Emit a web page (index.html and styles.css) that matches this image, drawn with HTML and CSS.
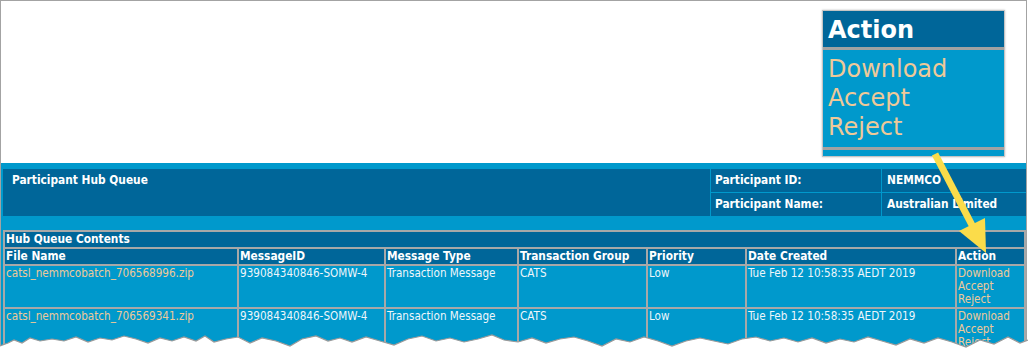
FILE: index.html
```html
<!DOCTYPE html>
<html lang="en">
<head>
    <meta charset="UTF-8">
    <meta name="viewport" content="width=device-width, initial-scale=1.0">
    <title>Participant Hub Queue</title>
    <link rel="stylesheet" href="styles.css">
</head>
<body>

<div class="page">
    <div class="blank"></div>
    <div class="band">
        <div class="hub-head">
            <div class="hub-title">Participant Hub Queue</div>
            <div class="hub-label">Participant ID:</div>
            <div class="hub-value">NEMMCO</div>
            <div class="hub-label">Participant Name:</div>
            <div class="hub-value">Australian Limited</div>
        </div>

        <table class="queue">
            <colgroup>
                <col class="c-file">
                <col class="c-id">
                <col class="c-type">
                <col class="c-group">
                <col class="c-prio">
                <col class="c-date">
                <col class="c-action">
            </colgroup>
            <tr>
                <th colspan="7">Hub Queue Contents</th>
            </tr>
            <tr>
                <th>File Name</th>
                <th>MessageID</th>
                <th>Message Type</th>
                <th>Transaction Group</th>
                <th>Priority</th>
                <th>Date Created</th>
                <th>Action</th>
            </tr>
            <tr>
                <td><a href="#">catsl_nemmcobatch_706568996.zip</a></td>
                <td>939084340846-SOMW-4</td>
                <td>Transaction Message</td>
                <td>CATS</td>
                <td>Low</td>
                <td>Tue Feb 12 10:58:35 AEDT 2019</td>
                <td><a href="#">Download</a><br><a href="#">Accept</a><br><a href="#">Reject</a></td>
            </tr>
            <tr>
                <td><a href="#">catsl_nemmcobatch_706569341.zip</a></td>
                <td>939084340846-SOMW-4</td>
                <td>Transaction Message</td>
                <td>CATS</td>
                <td>Low</td>
                <td>Tue Feb 12 10:58:35 AEDT 2019</td>
                <td><a href="#">Download</a><br><a href="#">Accept</a><br><a href="#">Reject</a></td>
            </tr>
        </table>
    </div>
</div>

<!-- enlarged view of the Action column -->
<div class="zoom-box">
    <div class="zoom-head">Action</div>
    <div class="zoom-sep"></div>
    <div class="zoom-body">
        <a href="#">Download</a><br>
        <a href="#">Accept</a><br>
        <a href="#">Reject</a>
    </div>
    <div class="zoom-sep"></div>
    <div class="zoom-foot"></div>
</div>

<svg class="arrow" width="1028" height="354" viewBox="0 0 1028 354">
    <line x1="935" y1="154" x2="974" y2="229" stroke="#fbdc4a" stroke-width="7"/>
    <polygon points="986,253 959,231 985,218" fill="#fbdc4a"/>
</svg>

<svg class="torn" width="1028" height="354" viewBox="0 0 1028 354">
    <polygon fill="#fff" stroke="none" points="0,346 8,343 14,340 22,343 30,338 40,341 52,339 64,341 76,337 88,342 100,338 112,340 124,336 136,339 148,343 160,338 172,341 184,337 196,341 205,336 214,342 226,339 238,337 250,343 262,338 276,341 290,346 302,339 316,336 328,341 340,338 352,342 366,337 380,341 394,345 408,339 422,336 436,341 450,338 464,342 478,339 492,335 504,340 518,342 532,338 546,343 560,339 574,337 588,341 602,346 616,339 630,342 644,337 658,341 672,346 686,341 700,338 714,341 728,344 742,339 756,337 770,341 784,338 798,342 812,338 826,343 840,339 854,342 868,337 882,341 896,345 910,339 924,343 938,338 952,342 966,347 980,340 994,344 1008,337 1020,343 1028,340 1028,354 0,354"/>
    <polyline fill="none" stroke="#9a9a9a" stroke-width="1.2" points="0,346 8,343 14,340 22,343 30,338 40,341 52,339 64,341 76,337 88,342 100,338 112,340 124,336 136,339 148,343 160,338 172,341 184,337 196,341 205,336 214,342 226,339 238,337 250,343 262,338 276,341 290,346 302,339 316,336 328,341 340,338 352,342 366,337 380,341 394,345 408,339 422,336 436,341 450,338 464,342 478,339 492,335 504,340 518,342 532,338 546,343 560,339 574,337 588,341 602,346 616,339 630,342 644,337 658,341 672,346 686,341 700,338 714,341 728,344 742,339 756,337 770,341 784,338 798,342 812,338 826,343 840,339 854,342 868,337 882,341 896,345 910,339 924,343 938,338 952,342 966,347 980,340 994,344 1008,337 1020,343 1028,340"/>
</svg>

</body>
</html>
```

FILE: styles.css
```css
body {
    margin: 0;
    background: #fff;
    font-family: "DejaVu Sans Condensed", "DejaVu Sans", sans-serif;
    font-size: 11.6px;
    line-height: 13px;
    overflow: hidden;
}

a {
    color: #efc998;
    text-decoration: none;
}

.page {
    width: 1027px;
    height: 354px;
    box-sizing: border-box;
    border: 1px solid #a3a3a3;
    border-bottom: none;
    display: flex;
    flex-direction: column;
}

.blank {
    height: 162px;
    flex: none;
}

.band {
    flex: 1;
    background: #0099cc;
    padding: 6px 0 0 2px;
}

/* header block */
.hub-head {
    display: grid;
    grid-template-columns: 707px 170px 1fr;
    grid-template-rows: 23px 23px;
    gap: 1px;
    width: 1023px;
    color: #fff;
    font-weight: bold;
    font-size: 11.8px;
}

.hub-head div {
    background: #006699;
    padding: 5px 0 0 5px;
}

.hub-head .hub-title {
    grid-row: span 2;
    padding-left: 9px;
}

.hub-head .hub-label {
    padding-left: 4px;
}

/* queue table */
.queue {
    margin-top: 14px;
    width: 1023px;
    table-layout: fixed;
    border-collapse: separate;
    border-spacing: 0;
    border: 1px solid #a8a8a8;
}

.queue th,
.queue td {
    border: 1px solid #a8a8a8;
    padding: 1px;
    text-align: left;
    vertical-align: top;
    white-space: nowrap;
    overflow: hidden;
}

.queue th {
    background: #006699;
    color: #fff;
    font-weight: bold;
    font-size: 11.8px;
}

.queue td {
    background: #0099cc;
    color: #eef6fb;
    height: 39px;
}

.c-file { width: 234px; }
.c-id { width: 147px; }
.c-type { width: 133px; }
.c-group { width: 129px; }
.c-prio { width: 99px; }
.c-date { width: 210px; }
.c-action { width: 69px; }

/* enlarged Action cell */
.zoom-box {
    position: absolute;
    left: 822px;
    top: 10px;
    width: 181px;
    border: 1px solid #c4c4c4;
    box-shadow: 0 0 2px rgba(0, 0, 0, 0.25);
    font-family: "DejaVu Sans", sans-serif;
}

.zoom-head {
    background: #006699;
    color: #fff;
    font-weight: bold;
    font-size: 24px;
    height: 36px;
    line-height: 38px;
    padding-left: 5px;
}

.zoom-sep {
    height: 3px;
    background: #a2a2a2;
}

.zoom-body {
    background: #0099cc;
    font-size: 24px;
    line-height: 29px;
    padding: 5px;
}

.zoom-foot {
    background: #0099cc;
    height: 6px;
}

.arrow,
.torn {
    position: absolute;
    left: 0;
    top: 0;
    pointer-events: none;
}
```
